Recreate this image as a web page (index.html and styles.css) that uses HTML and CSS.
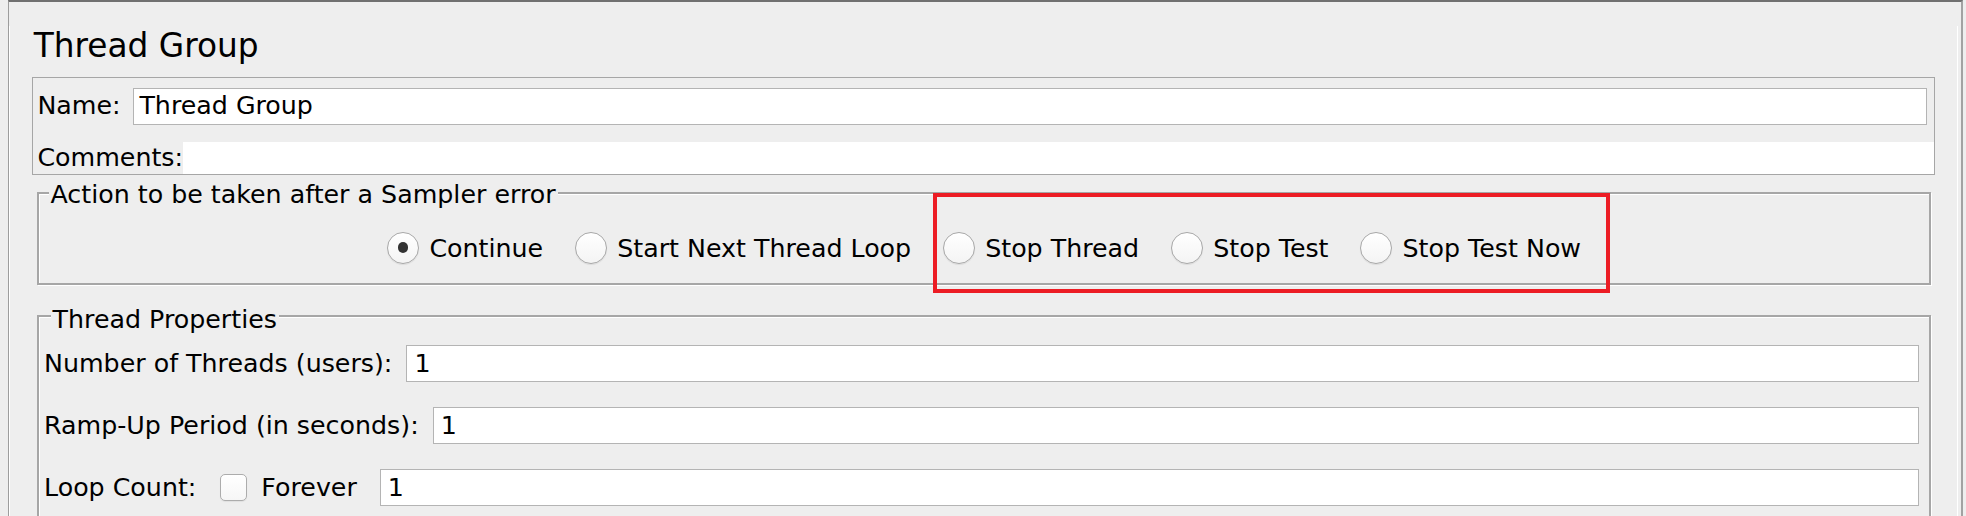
FILE: index.html
```html
<!DOCTYPE html>
<html>
<head>
<meta charset="utf-8">
<link rel="stylesheet" href="styles.css">
</head>
<body>
<div class="frame">
  <div class="inner">
    <div class="page-title">Thread Group</div>

    <div class="name-panel">
      <div class="row name-row">
        <span class="lbl name-lbl">Name:</span>
        <div class="field"><span class="val">Thread Group</span></div>
      </div>
      <div class="row comments-row">
        <span class="lbl comments-lbl">Comments:</span>
        <div class="comments-area"></div>
      </div>
    </div>

    <div class="group action-group">
      <div class="group-title">Action to be taken after a Sampler error</div>
      <div class="radio-row">
        <div class="opt"><span class="radio checked"><span class="dot"></span></span><span class="opt-lbl">Continue</span></div>
        <div class="opt"><span class="radio"></span><span class="opt-lbl">Start Next Thread Loop</span></div>
        <div class="opt"><span class="radio"></span><span class="opt-lbl">Stop Thread</span></div>
        <div class="opt"><span class="radio"></span><span class="opt-lbl">Stop Test</span></div>
        <div class="opt"><span class="radio"></span><span class="opt-lbl">Stop Test Now</span></div>
      </div>
    </div>

    <div class="group props-group">
      <div class="group-title props-title">Thread Properties</div>
      <div class="props-rows">
        <div class="prow">
          <span class="lbl">Number of Threads (users):</span>
          <div class="field"><span class="val num">1</span></div>
        </div>
        <div class="prow">
          <span class="lbl">Ramp-Up Period (in seconds):</span>
          <div class="field"><span class="val num">1</span></div>
        </div>
        <div class="prow loop-row">
          <span class="lbl">Loop Count:</span>
          <span class="checkbox"></span>
          <span class="lbl forever">Forever</span>
          <div class="field"><span class="val num">1</span></div>
        </div>
      </div>
    </div>
  </div>
</div>
<div class="highlight"></div>
</body>
</html>
```

FILE: styles.css
```css
html, body {
  margin: 0;
  padding: 0;
  height: 516px;
  overflow: hidden;
  background: #eeeeee;
}

body {
  position: relative;
  font-family: "DejaVu Sans", "Liberation Sans", sans-serif;
  font-size: 25.3px;
  color: #000;
}

.frame {
  margin: 0 3px 0 8px;
  height: 516px;
  box-sizing: border-box;
  overflow: hidden;
  border-top: 2px solid #707070;
  border-left: 1px solid #9d9d9d;
  border-right: 2px solid #a2a2a2;
}

.inner {
  height: 100%;
  margin-right: 3px;
  border-left: 1px solid #ffffff;
  border-right: 1px solid #ffffff;
}

.page-title {
  margin-top: 24px;
  padding-left: 23.7px;
  font-size: 32.8px;
  line-height: 40px;
  height: 40px;
}

.name-panel {
  margin: 10.5px 22px 0 22.4px;
  height: 98px;
  box-sizing: border-box;
  border: 1px solid #a6a6a6;
  padding: 10px 7px 0 4px;
  overflow: hidden;
}

.row {
  display: flex;
  align-items: center;
}

.lbl {
  white-space: nowrap;
  line-height: 30px;
}

.name-lbl {
  flex: 0 0 96px;
}

.field {
  flex: 1;
  height: 37px;
  box-sizing: border-box;
  background: #ffffff;
  border: 1px solid #b4b4b4;
  display: flex;
  align-items: center;
  padding-left: 5px;
}

.val {
  line-height: 30px;
  white-space: nowrap;
}

.val.num {
  padding-left: 2px;
}

.comments-row {
  margin-top: 17.5px;
  margin-right: -7px;
  align-items: flex-start;
}

.comments-lbl {
  flex: 0 0 142.6px;
  padding-top: 1px;
}

.comments-area {
  flex: 1;
  height: 40px;
  background: #ffffff;
}

.group {
  border: 2px solid #a6a6a6;
  box-shadow: inset 1px 1px 0 #ffffff, 1px 1px 0 #ffffff;
}

.group-title {
  width: fit-content;
  margin-top: -13px;
  margin-left: 9.5px;
  padding: 0 2px;
  background: #eeeeee;
  line-height: 28px;
  height: 28px;
  white-space: nowrap;
}

.action-group {
  margin: 17.5px 26px 0 27px;
  padding-bottom: 19px;
}

.radio-row {
  margin-top: 22.5px;
  height: 32px;
  display: flex;
  justify-content: center;
  align-items: center;
  gap: 31.5px;
}

.opt {
  display: flex;
  align-items: center;
  gap: 10.5px;
}

.opt-lbl {
  line-height: 30px;
  white-space: nowrap;
  padding-top: 3px;
}

.radio {
  width: 32px;
  height: 32px;
  box-sizing: border-box;
  border-radius: 50%;
  border: 1px solid #a8a8a8;
  background: linear-gradient(#ffffff, #f4f4f4);
  box-shadow: 0 1px 1px rgba(0, 0, 0, 0.08);
  display: flex;
  align-items: center;
  justify-content: center;
}

.dot {
  width: 10.5px;
  height: 10.5px;
  border-radius: 50%;
  background: #333333;
}

.props-group {
  margin: 30.5px 26.5px 0 27px;
  border-bottom: none;
  height: 199px;
}

.props-title {
  margin-top: -11px;
  margin-left: 11.6px;
}

.props-rows {
  margin-top: 11px;
  padding: 0 10px 0 5px;
  display: flex;
  flex-direction: column;
  gap: 25px;
}

.prow {
  display: flex;
  align-items: center;
  gap: 14px;
  height: 37px;
}

.loop-row {
  gap: 0;
}

.checkbox {
  width: 27px;
  height: 27px;
  box-sizing: border-box;
  margin-left: 24px;
  border: 1px solid #acacac;
  border-radius: 5px;
  background: linear-gradient(#ffffff, #f6f6f6);
  box-shadow: 0 1px 1px rgba(0, 0, 0, 0.06);
}

.forever {
  margin-left: 14px;
  margin-right: 23px;
}

.highlight {
  position: absolute;
  left: 933px;
  top: 193px;
  width: 677px;
  height: 100px;
  box-sizing: border-box;
  border: 4px solid #ec1c24;
}
```
